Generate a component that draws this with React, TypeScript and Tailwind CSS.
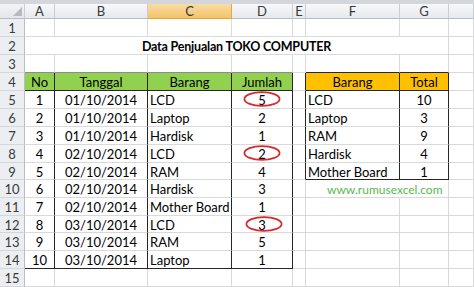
import React from "react";

type CellProps = {
  w: string;
  r?: string;
  b?: string;
  cls?: string;
  children?: React.ReactNode;
};

const LR = "border-r-[#d9d9d9]";
const LB = "border-b-[#d9d9d9]";
const DR = "border-r-[#262626]";
const DB = "border-b-[#262626]";

function Cell({ w, r = LR, b = LB, cls = "", children }: CellProps) {
  return (
    <div className={`${w} ${r} ${b} border-r border-b shrink-0 flex items-center pt-[2px] min-w-0 ${cls}`}>
      {children}
    </div>
  );
}

function RowHead({ n }: { n?: number }) {
  return (
    <div className="w-[25px] shrink-0 border-r border-b border-r-[#b9bdc3] border-b-[#d3d6da] bg-[#eceef1] flex items-center justify-center pt-[2px] text-[#3a3a3a]">
      {n}
    </div>
  );
}

function Ellipse({ dx = 0, dy = 0 }: { dx?: number; dy?: number }) {
  return (
    <svg
      className="absolute pointer-events-none"
      width="40"
      height="18"
      viewBox="0 0 40 18"
      style={{ left: `calc(50% - 20px + ${dx}px)`, top: `calc(50% - 9px + ${dy}px)` }}
    >
      <ellipse cx="20" cy="9" rx="17.6" ry="6.9" fill="none" stroke="#d42a2f" strokeWidth="1.7" />
    </svg>
  );
}

const t1 = [
  { no: 1, tgl: "01/10/2014", brg: "LCD", j: 5, c: true, dx: 0, dy: -0.3 },
  { no: 2, tgl: "01/10/2014", brg: "Laptop", j: 2 },
  { no: 3, tgl: "01/10/2014", brg: "Hardisk", j: 1 },
  { no: 4, tgl: "02/10/2014", brg: "LCD", j: 2, c: true, dx: 0, dy: -0.9 },
  { no: 5, tgl: "02/10/2014", brg: "RAM", j: 4 },
  { no: 6, tgl: "02/10/2014", brg: "Hardisk", j: 3 },
  { no: 7, tgl: "02/10/2014", brg: "Mother Board", j: 1 },
  { no: 8, tgl: "03/10/2014", brg: "LCD", j: 3, c: true, dx: 1.5, dy: 0.2 },
  { no: 9, tgl: "03/10/2014", brg: "RAM", j: 5 },
  { no: 10, tgl: "03/10/2014", brg: "Laptop", j: 1 },
];

const t2 = [
  { brg: "LCD", tot: 10 },
  { brg: "Laptop", tot: 3 },
  { brg: "RAM", tot: 9 },
  { brg: "Hardisk", tot: 4 },
  { brg: "Mother Board", tot: 1 },
];

const heights = ["h-[18px]", "h-[18px]", "h-[18px]", "h-[18px]", "h-[17px]", "h-[18px]", "h-[18px]", "h-[17px]", "h-[18px]", "h-[18px]"];

function ColHead({ w, label, active = false }: { w: string; label?: string; active?: boolean }) {
  return (
    <div
      className={`${w} shrink-0 border-r border-b flex items-center justify-center ${
        active
          ? "bg-[linear-gradient(#f9dca4,#f3c46a)] border-r-[#e0a94c] border-b-[#e2a23c] text-[#333]"
          : "bg-[linear-gradient(#f7f8fa,#e6e9ed)] border-r-[#c9cdd2] border-b-[#b9bdc3] text-[#3a3a3a]"
      }`}
    >
      {label}
    </div>
  );
}

export default function App() {
  return (
    <div className="w-[474px] h-[287px] overflow-hidden bg-white font-[family-name:Lato,'Liberation_Sans',sans-serif] text-[13px] leading-[15px] text-black">
      <div className="h-[4px] bg-[#d3d6da]" />
      {/* column headers */}
      <div className="flex h-[15px]">
        <div className="w-[25px] shrink-0 border-r border-b border-r-[#c9cdd2] border-b-[#b9bdc3] bg-[linear-gradient(#f2f3f5,#e3e6ea)] flex items-end justify-end p-[2px]">
          <svg width="9" height="9" viewBox="0 0 9 9">
            <polygon points="9,0 9,9 0,9" fill="#b6b9bd" />
          </svg>
        </div>
        <ColHead w="w-[30px]" label="A" />
        <ColHead w="w-[93px]" label="B" />
        <ColHead w="w-[84px]" label="C" active />
        <ColHead w="w-[61px]" label="D" />
        <ColHead w="w-[13px]" label="E" />
        <ColHead w="w-[94px]" label="F" />
        <ColHead w="w-[49px]" label="G" />
        <ColHead w="flex-1" label="" />
      </div>

      {/* row 1 */}
      <div className="flex h-[18px]">
        <RowHead n={1} />
        <Cell w="w-[30px]" />
        <Cell w="w-[93px]" />
        <Cell w="w-[84px]" />
        <Cell w="w-[61px]" />
        <Cell w="w-[13px]" />
        <Cell w="w-[94px]" />
        <Cell w="w-[49px]" />
        <Cell w="flex-1" />
      </div>

      {/* row 2 title */}
      <div className="flex h-[18px]">
        <RowHead n={2} />
        <Cell w="w-[424px]" cls="justify-center font-bold text-[12.5px] tracking-[-0.2px]">
          Data Penjualan TOKO COMPUTER
        </Cell>
        <Cell w="flex-1" />
      </div>

      {/* row 3 */}
      <div className="flex h-[18px]">
        <RowHead n={3} />
        <Cell w="w-[30px]" b="border-b-[#8c8c8c]" />
        <Cell w="w-[93px]" b="border-b-[#8c8c8c]" />
        <Cell w="w-[84px]" b="border-b-[#8c8c8c]" />
        <Cell w="w-[61px]" b="border-b-[#8c8c8c]" />
        <Cell w="w-[13px]" />
        <Cell w="w-[94px]" b={DB} />
        <Cell w="w-[49px]" b={DB} />
        <Cell w="flex-1" />
      </div>

      {/* row 4 headers */}
      <div className="flex h-[18px]">
        <RowHead n={4} />
        <Cell w="w-[30px]" r={DR} b={DB} cls="justify-center bg-[#92d050]">No</Cell>
        <Cell w="w-[93px]" r={DR} b={DB} cls="justify-center bg-[#92d050]">Tanggal</Cell>
        <Cell w="w-[84px]" r={DR} b={DB} cls="justify-center bg-[#92d050]">Barang</Cell>
        <Cell w="w-[61px]" r={DR} b={DB} cls="justify-center bg-[#92d050]">Jumlah</Cell>
        <Cell w="w-[13px]" r={DR} />
        <Cell w="w-[94px]" r={DR} b={DB} cls="justify-center bg-[#ffc000]">Barang</Cell>
        <Cell w="w-[49px]" r={DR} b={DB} cls="justify-center bg-[#ffc000]">Total</Cell>
        <Cell w="flex-1" />
      </div>

      {/* rows 5-14 */}
      {t1.map((row, i) => {
        const last = i === t1.length - 1;
        const t2row = t2[i];
        const t2last = i === t2.length - 1;
        const b1 = last ? DB : LB;
        return (
          <div key={i} className={`flex ${heights[i]}`}>
            <RowHead n={i + 5} />
            <Cell w="w-[30px]" r={DR} b={b1} cls="justify-center">{row.no}</Cell>
            <Cell w="w-[93px]" r={DR} b={b1} cls="justify-center">{row.tgl}</Cell>
            <Cell w="w-[84px]" r={DR} b={b1} cls="pl-[2px] whitespace-nowrap">{row.brg}</Cell>
            <Cell w="w-[61px]" r={DR} b={b1} cls="justify-center relative">
              {row.j}
              {row.c && <Ellipse dx={row.dx} dy={row.dy} />}
            </Cell>
            <Cell w="w-[13px]" r={t2row ? DR : LR} />
            {i === 5 ? (
              <>
                <Cell w="w-[94px]" r="border-r-[#ffffff]" cls="pl-[21px] whitespace-nowrap text-[12px] text-[#56bb4e] overflow-visible">
                  www.rumusexcel.com
                </Cell>
                <Cell w="w-[49px]" />
              </>
            ) : (
              <>
                <Cell w="w-[94px]" r={t2row ? DR : LR} b={t2row && t2last ? DB : LB} cls="pl-[2px] whitespace-nowrap">
                  {t2row?.brg}
                </Cell>
                <Cell w="w-[49px]" r={t2row ? DR : LR} b={t2row && t2last ? DB : LB} cls="justify-center">
                  {t2row?.tot}
                </Cell>
              </>
            )}
            <Cell w="flex-1" />
          </div>
        );
      })}

      {/* row 15 */}
      <div className="flex h-[18px]">
        <RowHead n={15} />
        <Cell w="w-[30px]" />
        <Cell w="w-[93px]" />
        <Cell w="w-[84px]" />
        <Cell w="w-[61px]" />
        <Cell w="w-[13px]" />
        <Cell w="w-[94px]" />
        <Cell w="w-[49px]" />
        <Cell w="flex-1" />
      </div>
    </div>
  );
}
